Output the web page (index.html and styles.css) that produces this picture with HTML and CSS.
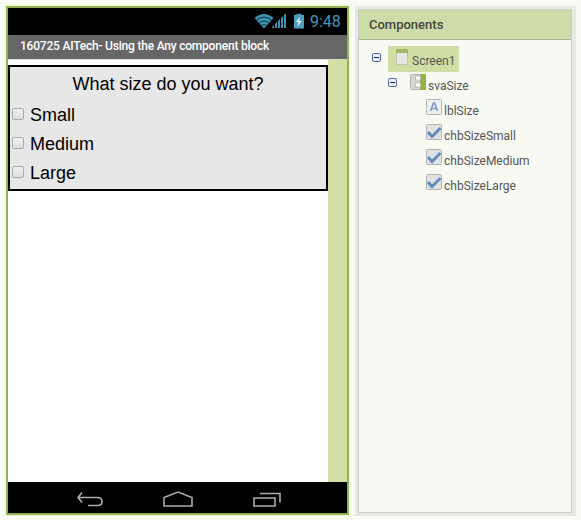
FILE: index.html
```html
<!DOCTYPE html>
<html lang="en">
<head>
<meta charset="utf-8">
<title>Designer</title>
<link rel="stylesheet" href="styles.css">
</head>
<body>
<main class="designer">
  <section class="phone">
    <div class="status-bar">
      <svg class="status-icons" width="52" height="18" viewBox="0 0 52 18">
        <path d="M1.500 5Q11 -3 20.500 5L11 15.500Z" fill="#3f92b2"/>
        <path d="M3.500 7.200Q11 1 18.500 7.200M6 10Q11 6 16 10M8.500 12.500Q11 10.500 13.500 12.500" fill="none" stroke="#04141c" stroke-width=".8"/>
        <path d="M19 15v-1l2-2v3zM22 15v-4l2-2v6zM25 15V8l2-2v9zM28 15V5l2-2v12zM31 15V2l2-1.500V15z" fill="#3f92b2"/>
        <path d="M41 2h2.500V.8h5V2H51v13.500H41z" fill="#4d9fbd"/>
        <path d="M47 4l-4 5h2.500l-1 4.500 4-5.500H46z" fill="#f0fbff"/>
      </svg>
      <span class="clock">9:48</span>
    </div>
    <div class="title-bar"><span>160725 AITech- Using the Any component block</span></div>
    <div class="screen">
      <div class="arrangement">
        <div class="question"><span>What size do you want?</span></div>
        <div class="option"><i class="box"></i><span>Small</span></div>
        <div class="option"><i class="box"></i><span>Medium</span></div>
        <div class="option"><i class="box"></i><span>Large</span></div>
      </div>
    </div>
    <div class="nav-bar">
      <svg width="339" height="31" viewBox="0 0 339 31" fill="none" stroke="#adadad" stroke-width="1.600">
        <path d="M74 10.500L70 15.500L74 20.500M70 15.500H89.500Q94 15.500 94 19.500Q94 23.500 89.500 23.500H80"/>
        <path d="M156 24V15.500L170 10L184 15.500V24Z"/>
        <path d="M246 16H267V24H246ZM252 11.500H272V20.500"/>
      </svg>
    </div>
  </section>
  <section class="components">
    <div class="panel">
      <h1 class="panel-title">Components</h1>
      <div class="tree">
        <div class="row root">
          <svg class="toggle" width="9" height="9" viewBox="0 0 9 9"><rect x=".5" y=".5" width="8" height="8" rx="1.500" fill="#eef2fa" stroke="#5368a2"/><path d="M2 4.500h5" stroke="#101e56"/></svg>
          <div class="selected">
            <svg width="13" height="17" viewBox="0 0 13 17"><rect x=".5" y=".5" width="11" height="15" rx="1" fill="#e5e7e0" stroke="#bec3b3"/><path d="M0 4V1q0-1 1-1h10q1 0 1 1v3z" fill="#9db763"/></svg>
            <span class="t-screen">Screen1</span>
          </div>
        </div>
        <div class="row child">
          <svg class="toggle" width="9" height="9" viewBox="0 0 9 9"><rect x=".5" y=".5" width="8" height="8" rx="1.500" fill="#eef2fa" stroke="#5368a2"/><path d="M2 4.500h5" stroke="#101e56"/></svg>
          <svg class="icon" width="16" height="16" viewBox="0 0 16 16"><rect x=".5" y=".5" width="15" height="15" rx="1" fill="#d5d7d4" stroke="#b4b6b1"/><path d="M10 0h5q1 0 1 1v14q0 1-1 1h-5z" fill="#91b545"/><rect x="5.500" y="2" width="5" height="4" fill="#fff" stroke="#a8afa0" stroke-width=".7"/><rect x="5.500" y="9" width="5" height="4" fill="#fff" stroke="#a8afa0" stroke-width=".7"/></svg>
          <span class="t-sva">svaSize</span>
        </div>
        <div class="row leaf">
          <svg class="icon" width="16" height="16" viewBox="0 0 16 16"><rect x=".5" y=".5" width="15" height="15" rx="1" fill="#edf0f3" stroke="#b2b4b5"/><path d="M4.500 12L7.500 4h1l3 8M5.700 9.500h4.600" fill="none" stroke="#829cc4" stroke-width="1.700"/></svg>
          <span class="t-lbl">lblSize</span>
        </div>
        <div class="row leaf">
          <svg class="icon" width="16" height="16" viewBox="0 0 16 16"><rect x=".5" y=".5" width="15" height="15" rx="1" fill="#dfe2e5" stroke="#b2b4b5"/><path d="M2 8l4 4.500L14.500 4" fill="none" stroke="#668bbd" stroke-width="3"/></svg>
          <span class="t-small">chbSizeSmall</span>
        </div>
        <div class="row leaf">
          <svg class="icon" width="16" height="16" viewBox="0 0 16 16"><rect x=".5" y=".5" width="15" height="15" rx="1" fill="#dfe2e5" stroke="#b2b4b5"/><path d="M2 8l4 4.500L14.500 4" fill="none" stroke="#668bbd" stroke-width="3"/></svg>
          <span class="t-medium">chbSizeMedium</span>
        </div>
        <div class="row leaf">
          <svg class="icon" width="16" height="16" viewBox="0 0 16 16"><rect x=".5" y=".5" width="15" height="15" rx="1" fill="#dfe2e5" stroke="#b2b4b5"/><path d="M2 8l4 4.500L14.500 4" fill="none" stroke="#668bbd" stroke-width="3"/></svg>
          <span class="t-large">chbSizeLarge</span>
        </div>
      </div>
    </div>
  </section>
</main>
</body>
</html>
```
FILE: styles.css
```css
* { box-sizing: border-box; }
body { margin: 0; background: #fafbf6; overflow: hidden; white-space: nowrap; }
svg { display: block; flex: none; }
.designer { display: flex; gap: 6px; width: 581px; height: 520px; padding: 6px 5px 4px 6px; }
.phone {
  display: flex; flex-direction: column; flex: none;
  width: 343px; height: 509px;
  border: 2px solid #92b24f;
  box-shadow: 0 0 4px 1px #f0fbd0;
}
.status-bar { display: flex; height: 27px; background: #000; padding: 4px 6px 0 0; justify-content: flex-end; gap: 5px; }
.clock { font: 16px/19px Roboto, sans-serif; color: #4596b6; width: 31px; }
.status-icons { margin-top: 1px; }
.title-bar { height: 24px; background: #666; padding-left: 12px; font: 500 12px/22px Roboto, sans-serif; letter-spacing: -.21px; color: #fff; }
.screen { height: 423px; background: #fff; border-top: 1px solid #ddd; border-right: 19px solid #d1dfa5; border-top-width: 1px; padding-top: 5px; }
.arrangement { height: 126px; border: 2px solid #000; background: #e7e7e7; font: 18px/29px "Liberation Sans", Arial, sans-serif; color: #000; }
.question { height: 33px; line-height: 34px; text-align: center; }
.option { display: flex; height: 29px; padding-left: 2px; gap: 6px; line-height: 31px; }
.box { width: 12px; height: 12px; margin-top: 8px; border: 1px solid #aaa; border-radius: 2px; background: linear-gradient(#f0f0f0, #dedede); }
.nav-bar { height: 31px; background: #000; }
.components {
  width: 221px; height: 510px; padding: 3px 4px 3px 3px; flex: none;
  background: repeating-conic-gradient(#dededb 0 25%, #f1f2ee 0 50%) 0 0 / 2px 2px;
}
.panel { height: 504px; background: #f8f9f3; border: 1px solid #ccceca; }
.panel-title { margin: 0; height: 30px; padding-left: 10px; background: #cddca8; border-bottom: 1px solid #adb89b; font: 500 13px/29px Roboto, sans-serif; color: #45483c; }
.tree { padding-top: 6px; font: 12px/16px Roboto, sans-serif; color: #555; }
.row { display: flex; height: 25px; }
.root { height: 26px; padding-left: 13px; gap: 7px; }
.toggle { margin-top: 7px; }
.selected { display: flex; width: 71px; height: 26px; padding: 3px 0 0 8px; background: #d0dda4; gap: 3px; }
.selected span { margin-top: 4px; }
.child { padding-left: 29px; }
.child .toggle { margin-top: 6px; }
.child .icon { margin: 2px 2px 0 13px; }
.row > span { margin-top: 6px; }
.leaf { padding: 0 0 0 67px; gap: 2px; }
.leaf .icon { margin-top: 2px; }
```
